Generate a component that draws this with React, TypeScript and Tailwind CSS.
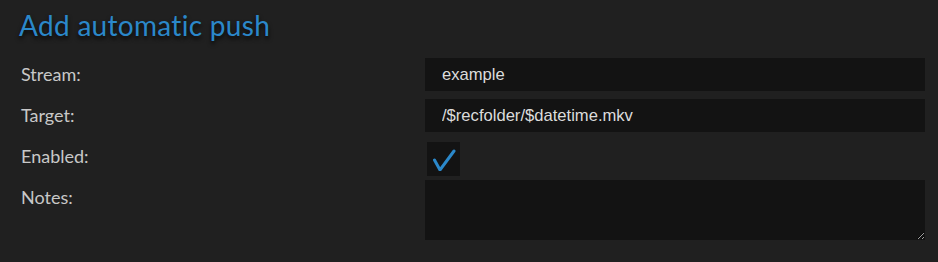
import { useState } from 'react'

export default function App() {
  const [stream, setStream] = useState('example')
  const [target, setTarget] = useState('/$recfolder/$datetime.mkv')
  const [enabled, setEnabled] = useState(true)
  const [notes, setNotes] = useState('')

  const label = 'w-[425px] shrink-0 pl-[21px] text-[18px] text-[#c8c8c8]'
  const input =
    'h-[33px] w-[500px] bg-[#131313] pl-[17px] text-[16.6px] text-[#dcdcdc] outline-none font-["Liberation_Sans",Arial,sans-serif]'

  return (
    <div className="min-h-[262px] w-[938px] bg-[#202020] font-['Lato',sans-serif]">
      <h1 className="pl-[19px] pt-[7px] text-[28px] leading-[36px] tracking-[0.3px] text-[#2b88ca] [text-shadow:0_3px_4px_rgba(0,0,0,0.8)]">
        Add automatic push
      </h1>
      <div className="mt-[15px] flex items-center">
        <div className={label}>Stream:</div>
        <input className={input} value={stream} onChange={(e) => setStream(e.target.value)} />
      </div>
      <div className="mt-[8px] flex items-center">
        <div className={label}>Target:</div>
        <input className={input} value={target} onChange={(e) => setTarget(e.target.value)} />
      </div>
      <div className="mt-[10px] flex items-start">
        <div className={label + ' pt-[1px]'}>Enabled:</div>
        <button
          type="button"
          onClick={() => setEnabled(!enabled)}
          className="ml-[2px] flex h-[34px] w-[33px] items-center justify-center bg-[#131313]"
        >
          {enabled && (
            <svg width="24" height="24" viewBox="0 0 24 24">
              <polyline
                points="2.5,13 8,23 22,4"
                fill="none"
                stroke="#2b88ca"
                strokeWidth="3"
                strokeLinecap="round"
                strokeLinejoin="miter"
              />
            </svg>
          )}
        </button>
      </div>
      <div className="mt-[4px] flex items-start">
        <div className={label + ' pt-[4px]'}>Notes:</div>
        <textarea
          className="h-[60px] w-[500px] bg-[#131313] p-[4px] text-[16px] text-[#dcdcdc] outline-none"
          value={notes}
          onChange={(e) => setNotes(e.target.value)}
        />
      </div>
    </div>
  )
}
